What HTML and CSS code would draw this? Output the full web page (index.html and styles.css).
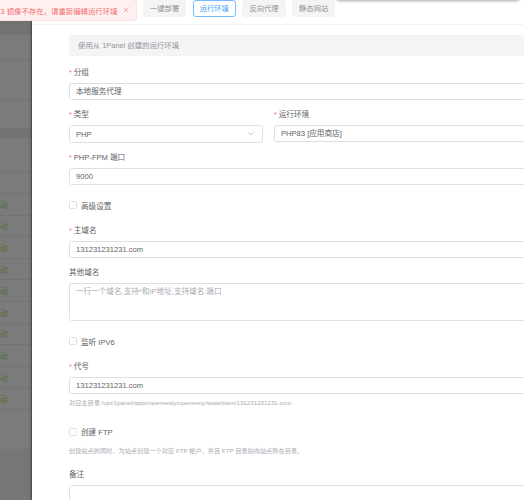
FILE: index.html
```html
<!DOCTYPE html>
<html lang="zh-CN">
<head>
<meta charset="utf-8">
<title>创建网站</title>
<link rel="stylesheet" href="styles.css">
</head>
<body>
<div class="page">
  <div class="mask">
    <div class="m m-top"></div>
    <div class="m m-head"></div>
    <div class="m m-r25 line"></div>
    <div class="m m-r40 line"></div>
    <div class="m m-r28"></div>
    <div class="m m-band"></div>
    <div class="m m-r34 line"></div>
    <div class="m m-r22 line"></div>
    <div class="m m-row line"><span>动</span></div>
    <div class="m m-row line"><span>动</span></div>
    <div class="m m-row line"><span>动</span></div>
    <div class="m m-row line"><span>动</span></div>
    <div class="m m-row line"><span>动</span></div>
    <div class="m m-row line"><span>动</span></div>
    <div class="m m-row line"><span>动</span></div>
    <div class="m m-row line"><span>动</span></div>
    <div class="m m-row line"><span>动</span></div>
    <div class="m m-row line"><span>动</span></div>
    <div class="m m-r39"></div>
    <div class="m m-foot"></div>
  </div>

  <div class="drawer">
    <div class="tabs">
      <button class="tab">一键部署</button>
      <button class="tab active">运行环境</button>
      <button class="tab">反向代理</button>
      <button class="tab">静态网站</button>
    </div>

    <div class="form">
      <div class="alert">使用从 1Panel 创建的运行环境</div>

      <div class="item">
        <div class="label req">分组</div>
        <div class="input">本地服务代理</div>
      </div>

      <div class="row">
        <div class="item col-l">
          <div class="label req">类型</div>
          <div class="input select">
            <span>PHP</span>
            <svg class="chev" width="6" height="4" viewBox="0 0 6 4"><polyline points="0.5,0.5 3,3 5.5,0.5" fill="none" stroke="#a8abb2" stroke-width="0.7"/></svg>
          </div>
        </div>
        <div class="item col-r">
          <div class="label req">运行环境</div>
          <div class="input">PHP83 [应用商店]</div>
        </div>
      </div>

      <div class="item">
        <div class="label req">PHP-FPM 端口</div>
        <div class="input">9000</div>
      </div>

      <div class="check-item">
        <div class="check"><span class="box"></span><span>高级设置</span></div>
      </div>

      <div class="item">
        <div class="label req">主域名</div>
        <div class="input">131231231231.com</div>
      </div>

      <div class="item">
        <div class="label">其他域名</div>
        <div class="textarea placeholder">一行一个域名,支持*和IP地址,支持域名:端口</div>
      </div>

      <div class="check-item">
        <div class="check"><span class="box"></span><span>监听 IPV6</span></div>
      </div>

      <div class="item item-help">
        <div class="label req">代号</div>
        <div class="input">131231231231.com</div>
        <div class="help help-tight">对应主目录:/opt/1panel/apps/openresty/openresty/www/sites/131231231231.com</div>
      </div>

      <div class="check-item check-help">
        <div class="check"><span class="box"></span><span>创建 FTP</span></div>
        <div class="help help-ftp">创建站点的同时，为站点创建一个对应 FTP 帐户，并且 FTP 目录指向站点所在目录。</div>
      </div>

      <div class="item">
        <div class="label">备注</div>
        <div class="textarea"></div>
      </div>
    </div>
  </div>

  <div class="message">
    <span>3 镜像不存在，请重新编辑运行环境</span>
    <svg class="close" width="6" height="6" viewBox="0 0 6 6"><path d="M0.6 0.6 L5.4 5.4 M5.4 0.6 L0.6 5.4" stroke="#e79c9c" stroke-width="0.8" fill="none"/></svg>
  </div>
  <div class="top-shadow"></div>
</div>
</body>
</html>
```

FILE: styles.css
```css
* { box-sizing: border-box; }

html, body {
  margin: 0;
  padding: 0;
  width: 524px;
  height: 500px;
  overflow: hidden;
  background: #ffffff;
}

body {
  font-family: "Liberation Sans", "Noto Sans CJK SC", sans-serif;
  font-size: 7.6px;
  color: #606266;
}

.page {
  position: relative;
  display: flex;
  width: 524px;
  height: 500px;
  overflow: hidden;
}

/* ---------- masked page behind the drawer ---------- */
.mask {
  width: 32px;
  flex: none;
  display: flex;
  flex-direction: column;
  background: #7b7b7b;
  border-right: 1px solid #5c5c5c;
}

.m { flex: none; background: #7b7b7b; }
.m.line { border-bottom: 1px solid #737373; }
.m-top { height: 20px; }
.m-head { height: 15px; background: #727272; }
.m-r25 { height: 25px; }
.m-r40 { height: 40px; }
.m-r28 { height: 28px; }
.m-band { height: 10px; background: #737373; }
.m-r34 { height: 34px; }
.m-r22 { height: 22px; }
.m-row {
  height: 21.6px;
  display: flex;
  align-items: center;
  padding-left: 0;
  overflow: hidden;
  white-space: nowrap;
}
.m-row span { color: #4f6f37; font-size: 7.6px; }
.m-r39 { height: 39px; }
.m-foot { flex: 1; background: #767676; }

/* ---------- drawer ---------- */
.drawer {
  flex: 1;
  background: #ffffff;
  overflow: hidden;
  box-shadow: -1px 0 3px rgba(0, 0, 0, 0.25);
}

.tabs {
  height: 25px;
  display: flex;
  align-items: flex-start;
  gap: 6.5px;
  padding-left: 111px;
  border-bottom: 1px solid #f2f3f5;
}

.tab {
  height: 17px;
  padding: 0 6px;
  margin: 0;
  border: 1px solid #f4f4f5;
  border-radius: 3px;
  background: #f4f4f5;
  color: #909399;
  font-family: "Liberation Sans", "Noto Sans CJK SC", sans-serif;
  font-size: 7.3px;
  line-height: 15px;
}
.tab.active {
  background: #ffffff;
  border-color: #79bbff;
  color: #409eff;
}

.form {
  width: 560px;
  margin-left: 37px;
  padding-top: 10px;
}

.alert {
  height: 21px;
  line-height: 21px;
  padding-left: 9px;
  background: #f4f4f5;
  color: #909399;
  border-radius: 2px;
  font-size: 7.4px;
  margin-bottom: 5.8px;
}

.item { margin-bottom: 4.5px; }

.label {
  height: 21px;
  line-height: 21px;
  color: #606266;
  white-space: nowrap;
}
.label.req::before {
  content: "*";
  color: #f56c6c;
  margin-right: 2px;
  font-size: 7px;
}

.input {
  height: 17px;
  line-height: 15px;
  padding: 0 6px;
  border: 1px solid #dcdfe6;
  border-radius: 2.5px;
  color: #606266;
  white-space: nowrap;
  background: #fff;
}

.select {
  display: flex;
  align-items: center;
  justify-content: space-between;
  padding-right: 8px;
  height: 17.5px;
}
.chev { display: block; }

.row {
  display: flex;
  gap: 11px;
}
.col-l { width: 194px; flex: none; }
.col-r { flex: 1; }

.textarea {
  height: 38px;
  padding: 3px 6px;
  line-height: 9px;
  border: 1px solid #dcdfe6;
  border-radius: 2.5px;
  color: #606266;
}
.textarea.placeholder { color: #a8abb2; }

.check-item {
  height: 30px;
  padding-top: 7px;
}
.check {
  height: 17px;
  display: flex;
  align-items: center;
  gap: 4px;
  color: #606266;
}
.box {
  width: 8px;
  height: 8px;
  border: 1px solid #dcdfe6;
  border-radius: 1.5px;
  background: #fff;
  flex: none;
}

.help {
  font-size: 6.2px;
  line-height: 12px;
  color: #a8abb2;
  white-space: nowrap;
}
.item-help { margin-bottom: 7.5px; }
.help-tight { margin-top: 3px; }

.check-help { height: auto; padding-bottom: 0; margin-bottom: 7.5px; }
.help-ftp { margin-top: 4.5px; }

/* ---------- floating message ---------- */
.message {
  position: absolute;
  top: -1px;
  left: 0;
  width: 137px;
  height: 22px;
  display: flex;
  align-items: center;
  gap: 5px;
  padding: 0 0 0 0.5px;
  background: #fef0f0;
  border: 1px solid #fde2e2;
  border-left: none;
  border-radius: 0 3px 3px 0;
  color: #f56c6c;
  font-size: 7.4px;
  white-space: nowrap;
}
.close { display: block; flex: none; }

.top-shadow {
  position: absolute;
  top: -10px;
  left: 336px;
  width: 184px;
  height: 10px;
  border-radius: 4px;
  box-shadow: 0 1px 3px rgba(0, 0, 0, 0.35);
  background: #fff;
}
```
